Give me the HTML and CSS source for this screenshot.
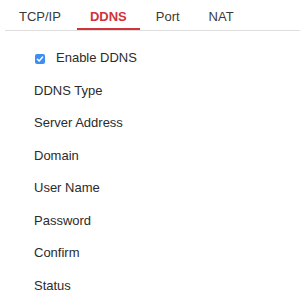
FILE: index.html
```html
<!DOCTYPE html>
<html>
<head>
<meta charset="utf-8">
<link rel="stylesheet" href="styles.css">
</head>
<body>
<div class="tabs">
  <div class="tab">TCP/IP</div>
  <div class="tab active">DDNS</div>
  <div class="tab">Port</div>
  <div class="tab">NAT</div>
</div>
<div class="form">
  <div class="row check-row">
    <span class="checkbox"><svg viewBox="0 0 10 10" width="10" height="10"><path d="M2.4 5.2 L4.2 7 L7.6 3" fill="none" stroke="#fff" stroke-width="1.5" stroke-linecap="round" stroke-linejoin="round"/></svg></span>
    <span>Enable DDNS</span>
  </div>
  <div class="row label">DDNS Type</div>
  <div class="row label">Server Address</div>
  <div class="row label">Domain</div>
  <div class="row label">User Name</div>
  <div class="row label">Password</div>
  <div class="row label">Confirm</div>
  <div class="row label">Status</div>
</div>
</body>
</html>
```
FILE: styles.css
```css
html, body {
  margin: 0;
  padding: 0;
  background: #fff;
}
body {
  font-family: "Liberation Sans", Arial, Helvetica, sans-serif;
  font-size: 13px;
  line-height: 15px;
  color: #333;
}
.tabs {
  display: flex;
  gap: 3px;
  margin-left: 5px;
  padding-left: 1px;
  border-bottom: 1px solid #dedede;
}
.tab {
  padding: 9px 13px 4px;
  border-bottom: 2px solid transparent;
  color: #3a3a3a;
}
.tab.active {
  color: #d2323a;
  font-weight: bold;
  border-bottom-color: #d2323a;
}
.form {
  padding-top: 10.5px;
}
.row {
  height: 32.5px;
  display: flex;
  align-items: center;
  padding-left: 34px;
  color: #2b2b2b;
}
.check-row {
  padding-left: 35px;
  gap: 11px;
}
.checkbox {
  width: 10px;
  height: 10px;
  border-radius: 2px;
  background: #3a8ff0;
  display: flex;
  margin-top: 2px;
}
.checkbox svg {
  display: block;
}
```
